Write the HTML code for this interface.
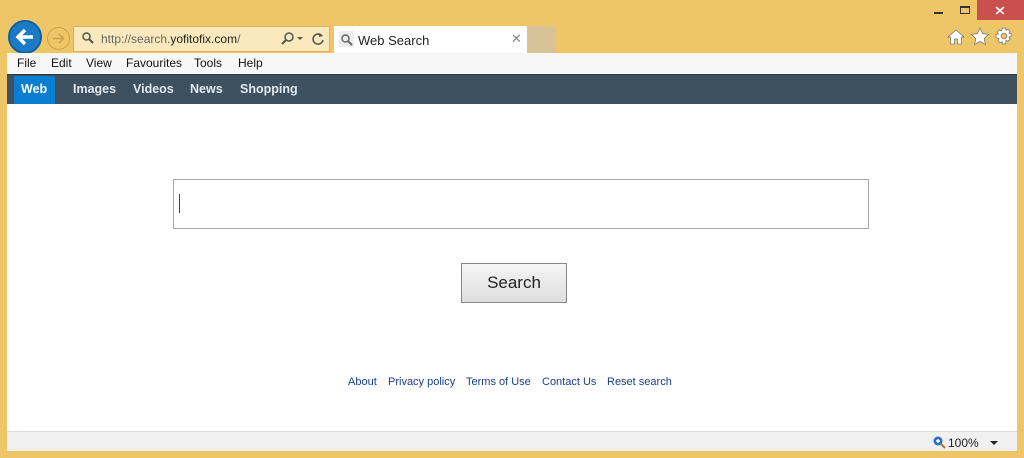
<!DOCTYPE html>
<html><head><meta charset="utf-8"><style>
*{margin:0;padding:0;box-sizing:border-box}
body{width:1024px;height:458px;background:#efc667;font-family:"Liberation Sans",sans-serif;position:relative;overflow:hidden}
.abs{position:absolute}
</style></head><body>
<!-- window buttons -->
<div class="abs" style="left:934px;top:12px;width:9px;height:2px;background:#333"></div>
<div class="abs" style="left:960px;top:6px;width:10px;height:8px;border:1px solid #333;border-top-width:2px"></div>
<div class="abs" style="left:977px;top:0;width:47px;height:20px;background:#c9504f"></div>
<svg class="abs" style="left:995px;top:6px" width="10" height="9"><path d="M1 1l8 7M9 1L1 8" stroke="#fff" stroke-width="1.6"/></svg>
<!-- back / forward -->
<div class="abs" style="left:8px;top:20px;width:34px;height:34px;border-radius:50%;background:#1b7bc4;border:2px solid #0f5f9f"></div>
<svg class="abs" style="left:13px;top:25px" width="24" height="24"><path d="M20 12H6M12 5l-7 7 7 7" stroke="#fff" stroke-width="3.5" fill="none"/></svg>
<div class="abs" style="left:47px;top:27px;width:23px;height:23px;border-radius:50%;border:1.5px solid #c9a24c"></div>
<svg class="abs" style="left:50px;top:30px" width="17" height="17"><path d="M3 8.5h10M9 4l4.5 4.5L9 13" stroke="#c9a24c" stroke-width="1.5" fill="none"/></svg>
<!-- address bar -->
<div class="abs" style="left:73px;top:26px;width:257px;height:26px;background:#fbe9be;border:1px solid #d8b35a"></div>
<svg class="abs" style="left:81px;top:31px" width="14" height="14"><circle cx="5.5" cy="5.5" r="3.5" stroke="#555" stroke-width="1.5" fill="none"/><path d="M8 8l4 4" stroke="#555" stroke-width="2"/></svg>
<div class="abs" style="left:101px;top:32px;font-size:12px;color:#666">http://search.<span style="color:#222">yofitofix.com</span>/</div>
<svg class="abs" style="left:280px;top:31px" width="46" height="16"><circle cx="9" cy="6" r="4" stroke="#555" stroke-width="1.5" fill="none"/><path d="M6 9l-4 4" stroke="#555" stroke-width="2"/><path d="M17 6h6l-3 3z" fill="#555"/><path d="M42 5a5 5 0 1 0 1 4" stroke="#555" stroke-width="1.6" fill="none"/><path d="M39 2l4 3-4 1z" fill="#555"/></svg>
<!-- tab -->
<div class="abs" style="left:334px;top:26px;width:193px;height:27px;background:#fff"></div>
<div class="abs" style="left:339px;top:31px;width:15px;height:16px;background:#eee"></div>
<svg class="abs" style="left:340px;top:33px" width="14" height="14"><circle cx="5.5" cy="5.5" r="3.5" stroke="#666" stroke-width="1.5" fill="none"/><path d="M8 8l4 4" stroke="#666" stroke-width="2"/></svg>
<div class="abs" style="left:358px;top:33px;font-size:13px;color:#222">Web Search</div>
<div class="abs" style="left:511px;top:31px;font-size:13px;color:#888">✕</div>
<div class="abs" style="left:527px;top:26px;width:29px;height:27px;background:#d7c397"></div>
<!-- right icons -->
<svg class="abs" style="left:946px;top:28px" width="20" height="18"><path d="M10 2L2 9h2.5v7h4v-5h3v5h4V9H18z" fill="#fff" stroke="#777" stroke-width="0.8"/></svg>
<svg class="abs" style="left:970px;top:27px" width="20" height="19"><path d="M10 1l2.6 5.6 6.1.7-4.5 4.2 1.2 6L10 14.5 4.6 17.5l1.2-6L1.3 7.3l6.1-.7z" fill="#fff" stroke="#777" stroke-width="0.8"/></svg>
<svg class="abs" style="left:995px;top:27px" width="18" height="18"><g transform="translate(9 9)" fill="#fff" stroke="#777" stroke-width="0.8"><path d="M-1.5-8h3l.5 2.3 2-1.2 2.1 2.1-1.2 2 2.3.5v3l-2.3.5 1.2 2-2.1 2.1-2-1.2L1.5 8h-3l-.5-2.3-2 1.2-2.1-2.1 1.2-2L-8 1.5v-3l2.3-.5-1.2-2 2.1-2.1 2 1.2z"/><circle r="2.8" fill="#efc667"/></g></svg>
<!-- content -->
<div class="abs" style="left:7px;top:53px;width:1010px;height:397px;background:#fff"></div>
<div class="abs" style="left:7px;top:53px;width:1010px;height:21px;background:#f7f7f7;font-size:12px;color:#111;line-height:21px">
<span style="position:absolute;left:10px">File</span><span style="position:absolute;left:44px">Edit</span><span style="position:absolute;left:79px">View</span><span style="position:absolute;left:119px">Favourites</span><span style="position:absolute;left:187px">Tools</span><span style="position:absolute;left:231px">Help</span></div>
<div class="abs" style="left:7px;top:74px;width:1010px;height:30px;background:#3e5161;border-top:1px solid #2c3a45"></div>
<div class="abs" style="left:14px;top:76px;width:41px;height:28px;background:#0a7fd2"></div>
<div class="abs" style="left:7px;top:82px;width:1010px;font-size:12.5px;font-weight:bold;color:#fff">
<span style="position:absolute;left:14px">Web</span><span style="position:absolute;left:66px;color:#e3e8ec">Images</span><span style="position:absolute;left:126px;color:#e3e8ec">Videos</span><span style="position:absolute;left:183px;color:#e3e8ec">News</span><span style="position:absolute;left:233px;color:#e3e8ec">Shopping</span></div>
<div class="abs" style="left:173px;top:179px;width:696px;height:50px;border:1px solid #aaa;background:#fff"></div>
<div class="abs" style="left:179px;top:194px;width:1px;height:19px;background:#444"></div>
<div class="abs" style="left:461px;top:263px;width:106px;height:40px;border:1px solid #888;background:linear-gradient(#f5f5f5,#dedede);font-size:17px;color:#222;text-align:center;line-height:38px">Search</div>
<div class="abs" style="left:0;top:376px;width:1024px;font-size:11px;color:#1a3d8c">
<span style="position:absolute;left:348px">About</span><span style="position:absolute;left:388px">Privacy policy</span><span style="position:absolute;left:466px">Terms of Use</span><span style="position:absolute;left:542px">Contact Us</span><span style="position:absolute;left:607px">Reset search</span></div>
<!-- status bar -->
<div class="abs" style="left:7px;top:431px;width:1010px;height:20px;background:#f0f0f0;border-top:1px solid #ddd"></div>
<svg class="abs" style="left:932px;top:435px" width="14" height="14"><circle cx="6" cy="6" r="4.5" fill="#2a6fc9"/><path d="M4 6h4M6 4v4" stroke="#fff" stroke-width="1.5"/><path d="M9 9l4 4" stroke="#a87a2c" stroke-width="2"/></svg>
<div class="abs" style="left:948px;top:436px;font-size:12px;color:#222">100%</div>
<div class="abs" style="left:990px;top:441px;border-left:4px solid transparent;border-right:4px solid transparent;border-top:4px solid #222"></div>
</body></html>
